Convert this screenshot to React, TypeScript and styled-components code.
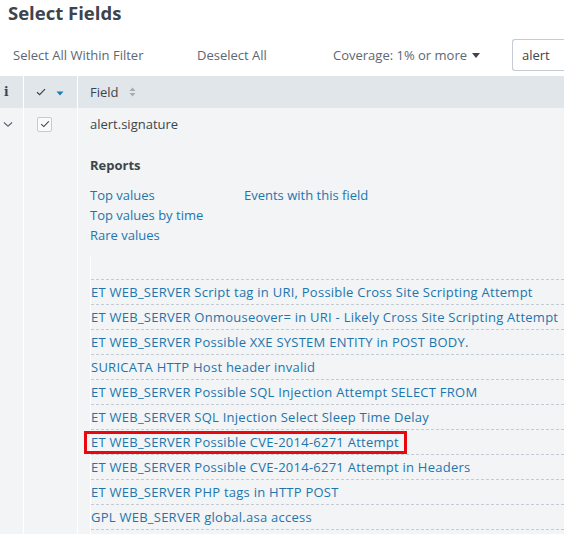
import React from "react";
import styled, { createGlobalStyle } from "styled-components";

const Global = createGlobalStyle`
  html, body { margin: 0; padding: 0; background: #ffffff; }
  body { font-family: "Open Sans", "Liberation Sans", sans-serif; overflow: hidden; }
  * { box-sizing: border-box; }
`;

const Page = styled.div`
  width: 564px;
  height: 534px;
  overflow: hidden;
  display: flex;
  flex-direction: column;
  background: #ffffff;
`;

const Title = styled.h1`
  flex-shrink: 0;
  margin: 0;
  padding: 0 0 0 8px;
  height: 26px;
  line-height: 25px;
  font-size: 18.5px;
  font-weight: 700;
  color: #3c444d;
`;

const Toolbar = styled.div`
  flex-shrink: 0;
  display: flex;
  align-items: center;
  height: 50px;
  padding-top: 8px;
  font-size: 13px;
  color: #5c6773;
  white-space: nowrap;
`;

const ToolButton = styled.span<{ $w: number }>`
  flex: 0 0 ${(p) => p.$w}px;
  padding-left: 13px;
  display: flex;
  align-items: center;
  gap: 4px;
`;

const Caret = styled.span`
  display: inline-block;
  width: 0;
  height: 0;
  border-left: 4px solid transparent;
  border-right: 4px solid transparent;
  border-top: 5px solid #3c444d;
  margin-left: 1px;
`;

const Search = styled.div`
  margin-left: auto;
  width: 52px;
  height: 32px;
  border: 1px solid #c3cbd4;
  border-right: none;
  border-radius: 3px 0 0 3px;
  padding-left: 9px;
  display: flex;
  align-items: center;
  color: #3c444d;
  font-size: 13px;
`;

const Grid = styled.div`
  display: grid;
  grid-template-columns: 23px 54px 1fr;
  grid-template-rows: 32px 1fr;
  flex: 1;
  min-height: 0;
  background: #f2f4f6;
`;

const HeadCell = styled.div<{ $divider?: boolean }>`
  height: 32px;
  background: #e1e6eb;
  display: flex;
  align-items: center;
  font-size: 13px;
  color: #3c444d;
  border-left: ${(p) => (p.$divider ? "1px solid #ffffff" : "none")};
  padding-left: ${(p) => (p.$divider ? "12px" : "4px")};
  gap: 10px;
`;

const InfoGlyph = styled.span`
  font-family: "DejaVu Serif", serif;
  font-weight: 700;
  font-size: 12px;
  color: #3c444d;
`;

const BodyCol = styled.div<{ $divider?: boolean }>`
  border-left: ${(p) => (p.$divider ? "1px solid #ffffff" : "none")};
  display: flex;
  flex-direction: column;
`;

const IconSlot = styled.div<{ $left: number }>`
  height: 32px;
  display: flex;
  align-items: center;
  padding-left: ${(p) => p.$left}px;
`;

const Checkbox = styled.span`
  width: 15px;
  height: 15px;
  border: 1px solid #c3cbd4;
  border-radius: 2px;
  background: #f9fafb;
  display: flex;
  align-items: center;
  justify-content: center;
`;

const FieldCol = styled.div`
  border-left: 1px solid #ffffff;
  padding-left: 12px;
  display: flex;
  flex-direction: column;
  min-height: 0;
`;

const FieldName = styled.div`
  height: 32px;
  line-height: 32px;
  font-size: 13px;
  color: #3c444d;
`;

const Section = styled.div`
  margin-top: 16px;
  font-size: 13px;
  font-weight: 700;
  color: #3c444d;
  line-height: 18px;
`;

const Reports = styled.div`
  display: grid;
  grid-template-columns: 154px auto;
  grid-auto-rows: 20px;
  margin-top: 11px;
  font-size: 13px;
  line-height: 20px;
`;

const Link = styled.a`
  color: #1c76ad;
  text-decoration: none;
  white-space: nowrap;
`;

const Values = styled.div`
  margin-top: 10px;
  border-left: 1px solid #ffffff;
  padding-top: 24px;
  margin-right: -10px;
`;

const ValueRow = styled.div`
  height: 25px;
  border-top: 1px dashed #c3cbd4;
  display: flex;
  align-items: center;
  font-size: 13px;
  letter-spacing: 0.25px;
  white-space: nowrap;
`;

const Marked = styled.span`
  display: inline-block;
  line-height: 17px;
  padding: 0 5px 0 4px;
  margin-left: -4px;
  outline: 3px solid #e8080e;
  outline-offset: 0;
`;

const HIGHLIGHT = "ET WEB_SERVER Possible CVE-2014-6271 Attempt";

const values = [
  "ET WEB_SERVER Script tag in URI, Possible Cross Site Scripting Attempt",
  "ET WEB_SERVER Onmouseover= in URI - Likely Cross Site Scripting Attempt",
  "ET WEB_SERVER Possible XXE SYSTEM ENTITY in POST BODY.",
  "SURICATA HTTP Host header invalid",
  "ET WEB_SERVER Possible SQL Injection Attempt SELECT FROM",
  "ET WEB_SERVER SQL Injection Select Sleep Time Delay",
  HIGHLIGHT,
  "ET WEB_SERVER Possible CVE-2014-6271 Attempt in Headers",
  "ET WEB_SERVER PHP tags in HTTP POST",
  "GPL WEB_SERVER global.asa access",
  "",
];

export default function App() {
  return (
    <Page>
      <Global />
      <Title>Select Fields</Title>
      <Toolbar>
        <ToolButton $w={184}>Select All Within Filter</ToolButton>
        <ToolButton $w={136}>Deselect All</ToolButton>
        <ToolButton $w={180}>
          Coverage: 1% or more <Caret />
        </ToolButton>
        <Search>alert</Search>
      </Toolbar>
      <Grid>
        <HeadCell>
          <InfoGlyph>i</InfoGlyph>
        </HeadCell>
        <HeadCell $divider>
          <svg width="10" height="8" viewBox="0 0 10 8">
            <path d="M1 4.2 L3.6 6.6 L9 1.2" fill="none" stroke="#3c444d" strokeWidth="1.2" />
          </svg>
          <svg width="8" height="5" viewBox="0 0 8 5" style={{ marginTop: 3 }}>
            <path d="M0.5 0.5 L7.5 0.5 L4 4.5 Z" fill="#1a7cb9" />
          </svg>
        </HeadCell>
        <HeadCell $divider>
          Field
          <svg width="7" height="10" viewBox="0 0 7 10">
            <path d="M0.5 4 L6.5 4 L3.5 0.5 Z M0.5 6 L6.5 6 L3.5 9.5 Z" fill="#a4acb4" />
          </svg>
        </HeadCell>
        <BodyCol>
          <IconSlot $left={3}>
            <svg width="10" height="7" viewBox="0 0 10 7">
              <path d="M1 1.5 L5 5.2 L9 1.5" fill="none" stroke="#5c6773" strokeWidth="1.2" />
            </svg>
          </IconSlot>
        </BodyCol>
        <BodyCol $divider>
          <IconSlot $left={13}>
            <Checkbox>
              <svg width="10" height="8" viewBox="0 0 10 8">
                <path d="M1.2 4.2 L3.8 6.6 L8.8 1.4" fill="none" stroke="#3c444d" strokeWidth="1.1" />
              </svg>
            </Checkbox>
          </IconSlot>
        </BodyCol>
        <FieldCol>
          <FieldName>alert.signature</FieldName>
          <Section>Reports</Section>
          <Reports>
            <Link href="#">Top values</Link>
            <Link href="#">Events with this field</Link>
            <Link href="#">Top values by time</Link>
            <span />
            <Link href="#">Rare values</Link>
          </Reports>
          <Values>
            {values.map((v, i) => (
              <ValueRow key={i}>
                {v === HIGHLIGHT ? (
                  <Marked>
                    <Link href="#">{v}</Link>
                  </Marked>
                ) : (
                  <Link href="#">{v}</Link>
                )}
              </ValueRow>
            ))}
          </Values>
        </FieldCol>
      </Grid>
    </Page>
  );
}
